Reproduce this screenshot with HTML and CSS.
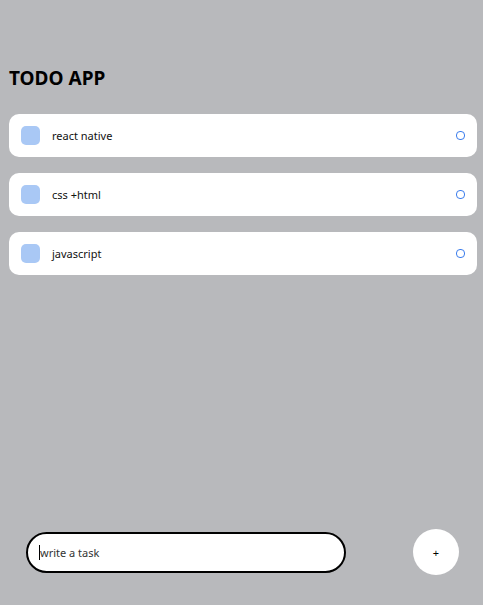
FILE: index.html
```html
<!DOCTYPE html>
<html>
<head>
<meta charset="utf-8">
<link rel="stylesheet" href="styles.css">
</head>
<body>
<div class="app">
  <h1 class="title">TODO APP</h1>
  <div class="list">
    <div class="card">
      <div class="left"><span class="square"></span><span class="text">react native</span></div>
      <span class="circle"></span>
    </div>
    <div class="card">
      <div class="left"><span class="square"></span><span class="text">css +html</span></div>
      <span class="circle"></span>
    </div>
    <div class="card">
      <div class="left"><span class="square"></span><span class="text">javascript</span></div>
      <span class="circle"></span>
    </div>
  </div>
  <div class="footer">
    <div class="input"><span class="caret"></span><span class="placeholder">write a task</span></div>
    <div class="add">+</div>
  </div>
</div>
</body>
</html>
```
FILE: styles.css
```css
html, body {
  margin: 0;
  padding: 0;
  height: 100%;
}
body {
  background: #b8b9bc;
  font-family: "Noto Sans", "DejaVu Sans", sans-serif;
  color: #000;
}
.app {
  display: flex;
  flex-direction: column;
  min-height: 100vh;
  box-sizing: border-box;
  padding: 66px 6px 30px 9px;
}
.title {
  margin: 0;
  font-size: 19px;
  font-weight: 700;
  line-height: 24px;
}
.list {
  display: flex;
  flex-direction: column;
  gap: 16px;
  margin-top: 24px;
}
.card {
  background: #fff;
  border-radius: 10px;
  height: 43px;
  display: flex;
  align-items: center;
  justify-content: space-between;
  padding: 0 12px;
}
.left {
  display: flex;
  align-items: center;
}
.square {
  width: 19px;
  height: 19px;
  border-radius: 5px;
  background: #a9c8f5;
  margin-right: 12px;
}
.text {
  font-size: 11px;
  color: #111;
}
.circle {
  width: 7px;
  height: 7px;
  border: 1.5px solid #3b7ded;
  border-radius: 4px;
}
.footer {
  margin-top: auto;
  display: flex;
  align-items: center;
}
.input {
  width: 320px;
  height: 41px;
  box-sizing: border-box;
  border: 2px solid #000;
  border-radius: 21px;
  background: #fff;
  display: flex;
  align-items: center;
  padding-left: 11px;
  margin-left: 17px;
}
.caret {
  width: 1px;
  height: 15px;
  background: #000;
}
.placeholder {
  font-size: 11px;
  color: #333;
}
.add {
  width: 46px;
  height: 46px;
  border-radius: 50%;
  background: #fff;
  display: flex;
  align-items: center;
  justify-content: center;
  font-size: 11px;
  margin-left: 67px;
}
```
